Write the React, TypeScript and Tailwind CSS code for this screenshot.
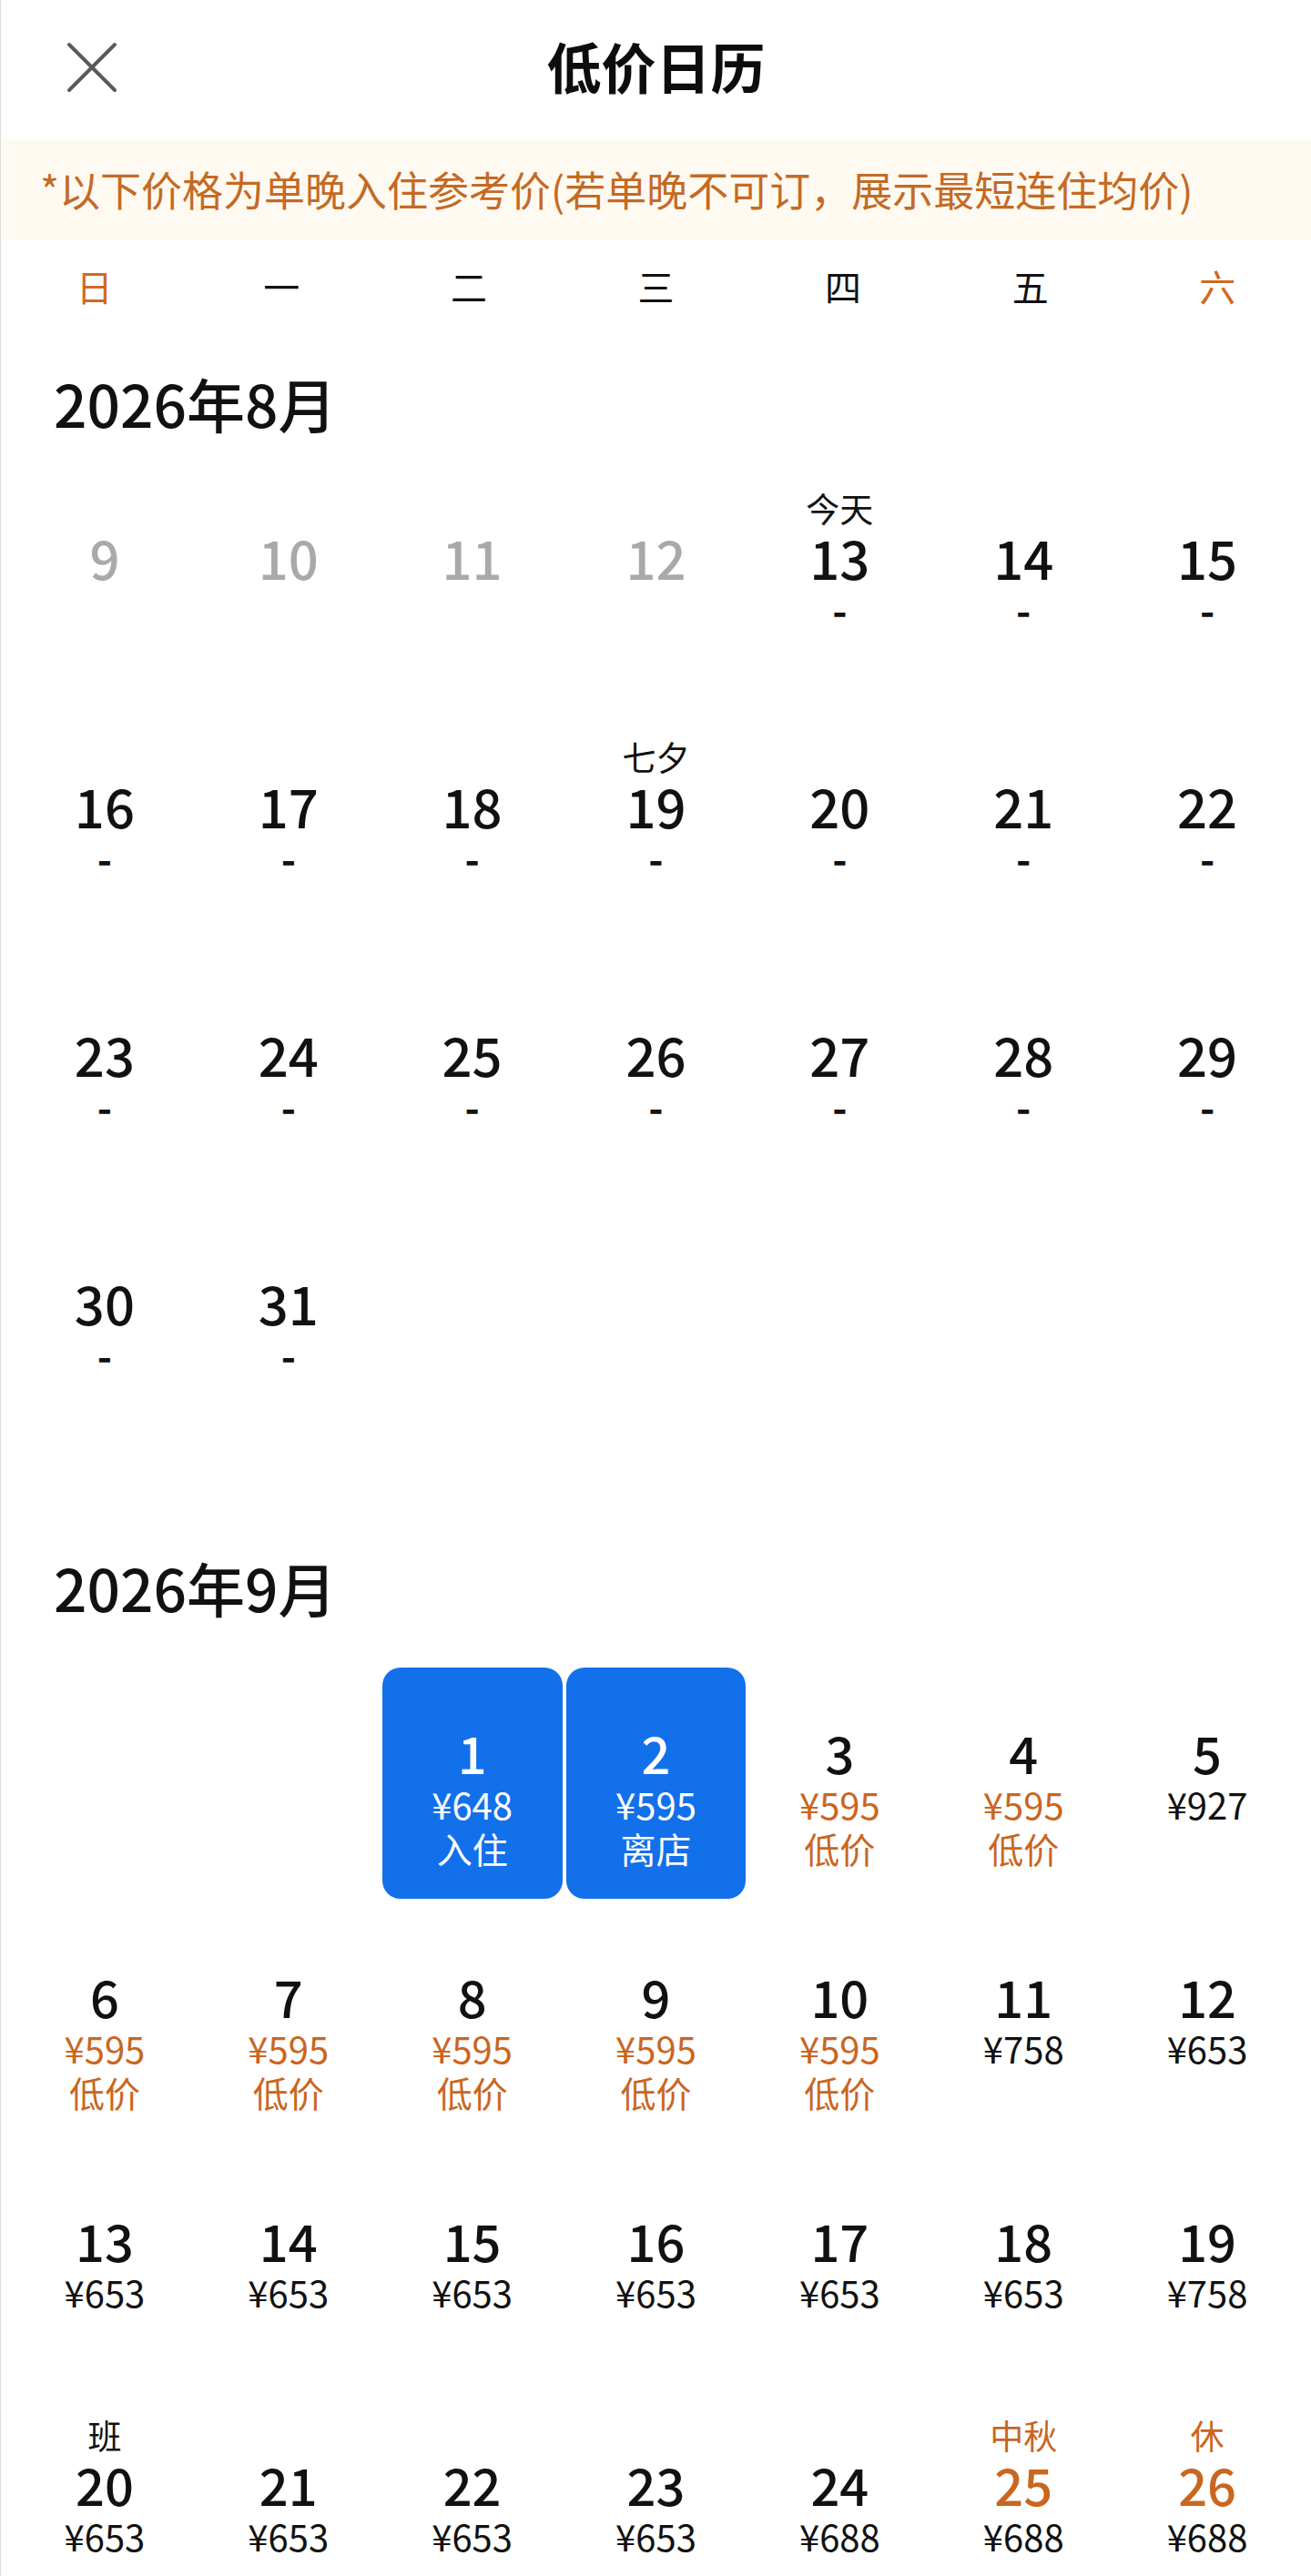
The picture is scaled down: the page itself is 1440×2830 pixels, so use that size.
import React from "react";

type Cell = {
  d?: number;
  top?: string;
  topOrange?: boolean;
  price?: string;
  priceOrange?: boolean;
  label?: string;
  gray?: boolean;
  numOrange?: boolean;
  sel?: boolean;
};

const FONT = "font-['Noto_Sans_CJK_SC','Noto_Sans',sans-serif]";

function DayCell({
  c,
  rowH,
  numSize,
  innerPt,
}: {
  c: Cell;
  rowH: string;
  numSize: string;
  innerPt: string;
}) {
  if (!c.d) return <div className={`${rowH} px-[2px] py-[7px]`} />;
  const numColor = c.sel
    ? "text-white"
    : c.gray
    ? "text-[#a9a9a9]"
    : c.numOrange
    ? "text-[#c9661f]"
    : "text-[#111111]";
  const priceColor = c.sel ? "text-white" : c.priceOrange ? "text-[#c9661f]" : "text-[#111111]";
  const topColor = c.sel ? "text-white" : c.topOrange ? "text-[#c9661f]" : "text-[#111111]";
  const isDash = c.price === "-";
  return (
    <div className={`${rowH} px-[2px] py-[7px]`}>
      <div
        className={`h-full rounded-[20px] flex flex-col items-center ${innerPt} ${
          c.sel ? "bg-[#1270eb]" : ""
        }`}
      >
        <div className={`h-[44px] leading-[44px] text-[37px] ${topColor}`}>{c.top ?? ""}</div>
        <div className={`h-[64px] leading-[64px] ${numSize} font-medium ${numColor}`}>{c.d}</div>
        <div
          className={`h-[50px] leading-[50px] ${isDash ? "text-[44px] font-bold" : "text-[40px]"} ${priceColor}`}
        >
          {c.price ?? ""}
        </div>
        <div className={`h-[46px] leading-[46px] text-[39px] ${priceColor}`}>{c.label ?? ""}</div>
      </div>
    </div>
  );
}

const aug: Cell[][] = [
  [
    { d: 9, gray: true },
    { d: 10, gray: true },
    { d: 11, gray: true },
    { d: 12, gray: true },
    { d: 13, top: "今天", price: "-" },
    { d: 14, price: "-" },
    { d: 15, price: "-" },
  ],
  [
    { d: 16, price: "-" },
    { d: 17, price: "-" },
    { d: 18, price: "-" },
    { d: 19, top: "七夕", price: "-" },
    { d: 20, price: "-" },
    { d: 21, price: "-" },
    { d: 22, price: "-" },
  ],
  [
    { d: 23, price: "-" },
    { d: 24, price: "-" },
    { d: 25, price: "-" },
    { d: 26, price: "-" },
    { d: 27, price: "-" },
    { d: 28, price: "-" },
    { d: 29, price: "-" },
  ],
  [{ d: 30, price: "-" }, { d: 31, price: "-" }, {}, {}, {}, {}, {}],
];

const low = (d: number): Cell => ({ d, price: "¥595", priceOrange: true, label: "低价" });

const sep: Cell[][] = [
  [
    {},
    {},
    { d: 1, price: "¥648", label: "入住", sel: true },
    { d: 2, price: "¥595", label: "离店", sel: true },
    low(3),
    low(4),
    { d: 5, price: "¥927" },
  ],
  [low(6), low(7), low(8), low(9), low(10), { d: 11, price: "¥758" }, { d: 12, price: "¥653" }],
  [
    { d: 13, price: "¥653" },
    { d: 14, price: "¥653" },
    { d: 15, price: "¥653" },
    { d: 16, price: "¥653" },
    { d: 17, price: "¥653" },
    { d: 18, price: "¥653" },
    { d: 19, price: "¥758" },
  ],
  [
    { d: 20, top: "班", price: "¥653" },
    { d: 21, price: "¥653" },
    { d: 22, price: "¥653" },
    { d: 23, price: "¥653" },
    { d: 24, price: "¥688" },
    { d: 25, top: "中秋", topOrange: true, numOrange: true, price: "¥688" },
    { d: 26, top: "休", topOrange: true, numOrange: true, price: "¥688" },
  ],
];

const weekdays = ["日", "一", "二", "三", "四", "五", "六"];

export default function App() {
  return (
    <div
      className={`${FONT} w-[1440px] h-[2830px] overflow-hidden bg-white text-[#111111] border-l border-[#dcdcdc]`}
    >
      {/* Header */}
      <div className="h-[153px] relative flex items-center justify-center">
        <button className="absolute left-[72px] top-[46px] w-[56px] h-[56px] flex items-center justify-center">
          <svg width="56" height="56" viewBox="0 0 56 56" fill="none">
            <path d="M3 3 L53 53 M53 3 L3 53" stroke="#5a5a5a" strokeWidth="4" strokeLinecap="round" />
          </svg>
        </button>
        <div className="text-[60px] leading-[70px] font-semibold text-[#0d0d0d] -mt-[10px]">低价日历</div>
      </div>

      {/* Notice */}
      <div className="h-[110px] bg-[#fffaf1] flex items-center pl-[43px]">
        <span className="text-[45px] leading-[56px] text-[#c46a24] whitespace-nowrap">
          *以下价格为单晚入住参考价(若单晚不可订，展示最短连住均价)
        </span>
      </div>

      {/* Weekdays */}
      <div className="grid grid-cols-7 h-[110px] items-center pb-[8px]">
        {weekdays.map((w, i) => (
          <div
            key={w}
            className={`text-center text-[40px] leading-[50px] ${
              i === 0 || i === 6 ? "text-[#cf6a22]" : "text-[#111111]"
            }`}
          >
            {w}
          </div>
        ))}
      </div>

      {/* August */}
      <div className="pl-[58px] pt-[29px] pb-[22px] text-[64px] leading-[80px] font-medium">2026年8月</div>
      <div className="px-[13px]">
        {aug.map((row, ri) => (
          <div key={ri} className="grid grid-cols-7">
            {row.map((c, ci) => (
              <DayCell key={ci} c={c} rowH="h-[273px]" numSize="text-[58px]" innerPt="pt-[25px]" />
            ))}
          </div>
        ))}
      </div>

      {/* September */}
      <div className="pl-[58px] pt-[107px] pb-[42px] text-[64px] leading-[80px] font-medium">2026年9月</div>
      <div className="px-[13px]">
        {sep.map((row, ri) => (
          <div key={ri} className="grid grid-cols-7">
            {row.map((c, ci) => (
              <DayCell key={ci} c={c} rowH="h-[268px]" numSize="text-[56px]" innerPt="pt-[17px]" />
            ))}
          </div>
        ))}
      </div>
    </div>
  );
}
